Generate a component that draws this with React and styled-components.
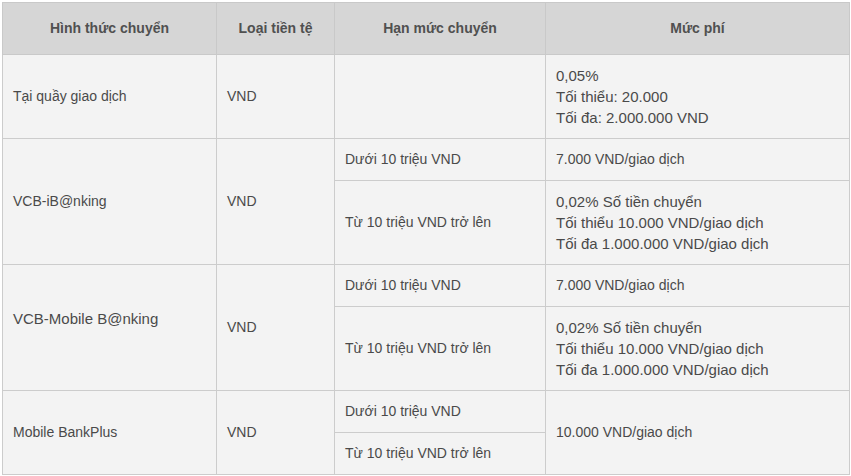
import styled, { createGlobalStyle } from "styled-components";

const GlobalStyle = createGlobalStyle`
  body {
    margin: 0;
    background: #ffffff;
    font-family: "Liberation Sans", Arial, sans-serif;
  }
`;

const Wrapper = styled.div`
  padding: 2px;
`;

const Table = styled.table`
  width: 847px;
  table-layout: fixed;
  border-collapse: collapse;
  font-size: 14px;
  line-height: 21px;
  color: #4a4a4a;
`;

const HeadCell = styled.th`
  background: #d6d6d6;
  border: 1px solid #c9c9c9;
  padding: 15px 10px;
  font-weight: bold;
  text-align: center;
  color: #505050;
`;

const Cell = styled.td`
  background: #f3f3f3;
  border: 1px solid #cccccc;
  padding: ${(p) => (p.$raised ? "10px 10px 28px" : "10px")};
  font-size: ${(p) => (p.$large ? "15px" : "14px")};
  vertical-align: middle;
  text-align: left;
`;

const Line = styled.div`
  white-space: nowrap;
`;

const rows = [
  {
    name: "Tại quầy giao dịch",
    tiers: [{ limit: "", fee: ["0,05%", "Tối thiểu: 20.000", "Tối đa: 2.000.000 VND"] }],
  },
  {
    name: "VCB-iB@nking",
    tiers: [
      { limit: "Dưới 10 triệu VND", fee: ["7.000 VND/giao dịch"] },
      {
        limit: "Từ 10 triệu VND trở lên",
        fee: ["0,02% Số tiền chuyển", "Tối thiểu 10.000 VND/giao dịch", "Tối đa 1.000.000 VND/giao dịch"],
      },
    ],
  },
  {
    name: "VCB-Mobile B@nking",
    large: true,
    tiers: [
      { limit: "Dưới 10 triệu VND", fee: ["7.000 VND/giao dịch"] },
      {
        limit: "Từ 10 triệu VND trở lên",
        fee: ["0,02% Số tiền chuyển", "Tối thiểu 10.000 VND/giao dịch", "Tối đa 1.000.000 VND/giao dịch"],
      },
    ],
  },
];

function App() {
  return (
    <Wrapper>
      <GlobalStyle />
      <Table>
        <colgroup>
          <col style={{ width: 214 }} />
          <col style={{ width: 118 }} />
          <col style={{ width: 211 }} />
          <col style={{ width: 304 }} />
        </colgroup>
        <thead>
          <tr>
            <HeadCell>Hình thức chuyển</HeadCell>
            <HeadCell>Loại tiền tệ</HeadCell>
            <HeadCell>Hạn mức chuyển</HeadCell>
            <HeadCell>Mức phí</HeadCell>
          </tr>
        </thead>
        <tbody>
          {rows.map((row) =>
            row.tiers.map((tier, i) => (
              <tr key={row.name + i}>
                {i === 0 && (
                  <>
                    <Cell rowSpan={row.tiers.length} $large={row.large} $raised={row.large}>
                      {row.name}
                    </Cell>
                    <Cell rowSpan={row.tiers.length}>VND</Cell>
                  </>
                )}
                <Cell>{tier.limit}</Cell>
                <Cell $large={tier.fee.length > 1}>
                  {tier.fee.map((f) => (
                    <Line key={f}>{f}</Line>
                  ))}
                </Cell>
              </tr>
            ))
          )}
          <tr>
            <Cell rowSpan={2}>Mobile BankPlus</Cell>
            <Cell rowSpan={2}>VND</Cell>
            <Cell>Dưới 10 triệu VND</Cell>
            <Cell rowSpan={2}>10.000 VND/giao dịch</Cell>
          </tr>
          <tr>
            <Cell>Từ 10 triệu VND trở lên</Cell>
          </tr>
        </tbody>
      </Table>
    </Wrapper>
  );
}

export default App;
